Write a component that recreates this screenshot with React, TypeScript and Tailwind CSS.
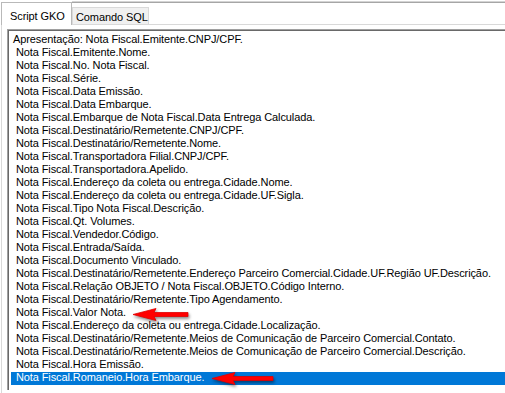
import React from "react";

const items: string[] = [
    "Apresentação: Nota Fiscal.Emitente.CNPJ/CPF.",
    " Nota Fiscal.Emitente.Nome.",
    " Nota Fiscal.No. Nota Fiscal.",
    " Nota Fiscal.Série.",
    " Nota Fiscal.Data Emissão.",
    " Nota Fiscal.Data Embarque.",
    " Nota Fiscal.Embarque de Nota Fiscal.Data Entrega Calculada.",
    " Nota Fiscal.Destinatário/Remetente.CNPJ/CPF.",
    " Nota Fiscal.Destinatário/Remetente.Nome.",
    " Nota Fiscal.Transportadora Filial.CNPJ/CPF.",
    " Nota Fiscal.Transportadora.Apelido.",
    " Nota Fiscal.Endereço da coleta ou entrega.Cidade.Nome.",
    " Nota Fiscal.Endereço da coleta ou entrega.Cidade.UF.Sigla.",
    " Nota Fiscal.Tipo Nota Fiscal.Descrição.",
    " Nota Fiscal.Qt. Volumes.",
    " Nota Fiscal.Vendedor.Código.",
    " Nota Fiscal.Entrada/Saída.",
    " Nota Fiscal.Documento Vinculado.",
    " Nota Fiscal.Destinatário/Remetente.Endereço Parceiro Comercial.Cidade.UF.Região UF.Descrição.",
    " Nota Fiscal.Relação OBJETO / Nota Fiscal.OBJETO.Código Interno.",
    " Nota Fiscal.Destinatário/Remetente.Tipo Agendamento.",
    " Nota Fiscal.Valor Nota.",
    " Nota Fiscal.Endereço da coleta ou entrega.Cidade.Localização.",
    " Nota Fiscal.Destinatário/Remetente.Meios de Comunicação de Parceiro Comercial.Contato.",
    " Nota Fiscal.Destinatário/Remetente.Meios de Comunicação de Parceiro Comercial.Descrição.",
    " Nota Fiscal.Hora Emissão.",
    " Nota Fiscal.Romaneio.Hora Embarque.",
];

const SELECTED = items.length - 1;

// red "pointer" arrow drawn over the list, tip on the left
const RedArrow = ({ length, className }: { length: number; className: string }) => (
    <svg
        width={length + 4}
        height={17}
        viewBox={`0 0 ${length + 4} 17`}
        className={className}
        style={{ filter: "drop-shadow(1px 2px 1.5px rgba(0,0,0,0.45))" }}
    >
        <polygon
            points={`0,6.5 23,0.5 21,4.5 ${length},4.5 ${length},8.5 21,8.5 23,12.5`}
            fill="#ff0000"
            stroke="#e00000"
            strokeWidth="0.8"
            strokeLinejoin="round"
        />
    </svg>
);

export default function App() {
    return (
        <div className="relative w-[505px] h-[393px] overflow-hidden bg-white text-[11px] tracking-[-0.1px] text-black font-['Liberation_Sans',Arial,sans-serif]">
            {/* tab strip */}
            <div className="flex h-[25px] pl-[1px]">
                <div className="mt-[2px] w-[71px] whitespace-nowrap border-t border-l border-r border-[#b9b9b9] bg-white pl-[8px] pt-[8px] leading-[11px]">
                    Script GKO
                </div>
                <div className="flex flex-1 flex-col border-b border-[#d9d9d9]">
                    <div className="mt-[1px] h-[2px] border-t border-b border-t-[#d4d4d4] border-b-[#a6a6a6]" />
                    <div className="flex flex-1 items-end">
                        <div className="h-[17px] w-[77px] whitespace-nowrap border-t border-l border-r border-[#d9d9d9] bg-[#f0f0f0] pl-[3px] pt-[4px] leading-[11px]">
                            Comando SQL
                        </div>
                    </div>
                </div>
            </div>

            {/* tab page */}
            <div className="ml-[1px] h-[368px] border-l border-[#d9d9d9] pl-[5px] pt-[4px]">
                <div className="w-[520px] border-t border-l border-[#a0a0a0]">
                    <div className="h-[360px] border-t border-l border-[#696969] pl-[2px] pt-[3px]">
                        {items.map((text, i) => (
                            <div
                                key={i}
                                className={
                                    i === SELECTED
                                        ? "h-[13px] whitespace-pre bg-[#0078d7] pl-[2px] leading-[11px] text-white"
                                        : "h-[13px] whitespace-pre pl-[2px] leading-[11px]"
                                }
                            >
                                {text}
                            </div>
                        ))}
                    </div>
                </div>
            </div>

            <RedArrow length={55} className="absolute left-[133px] top-[308px]" />
            <RedArrow length={61} className="absolute left-[212px] top-[372px]" />
        </div>
    );
}
